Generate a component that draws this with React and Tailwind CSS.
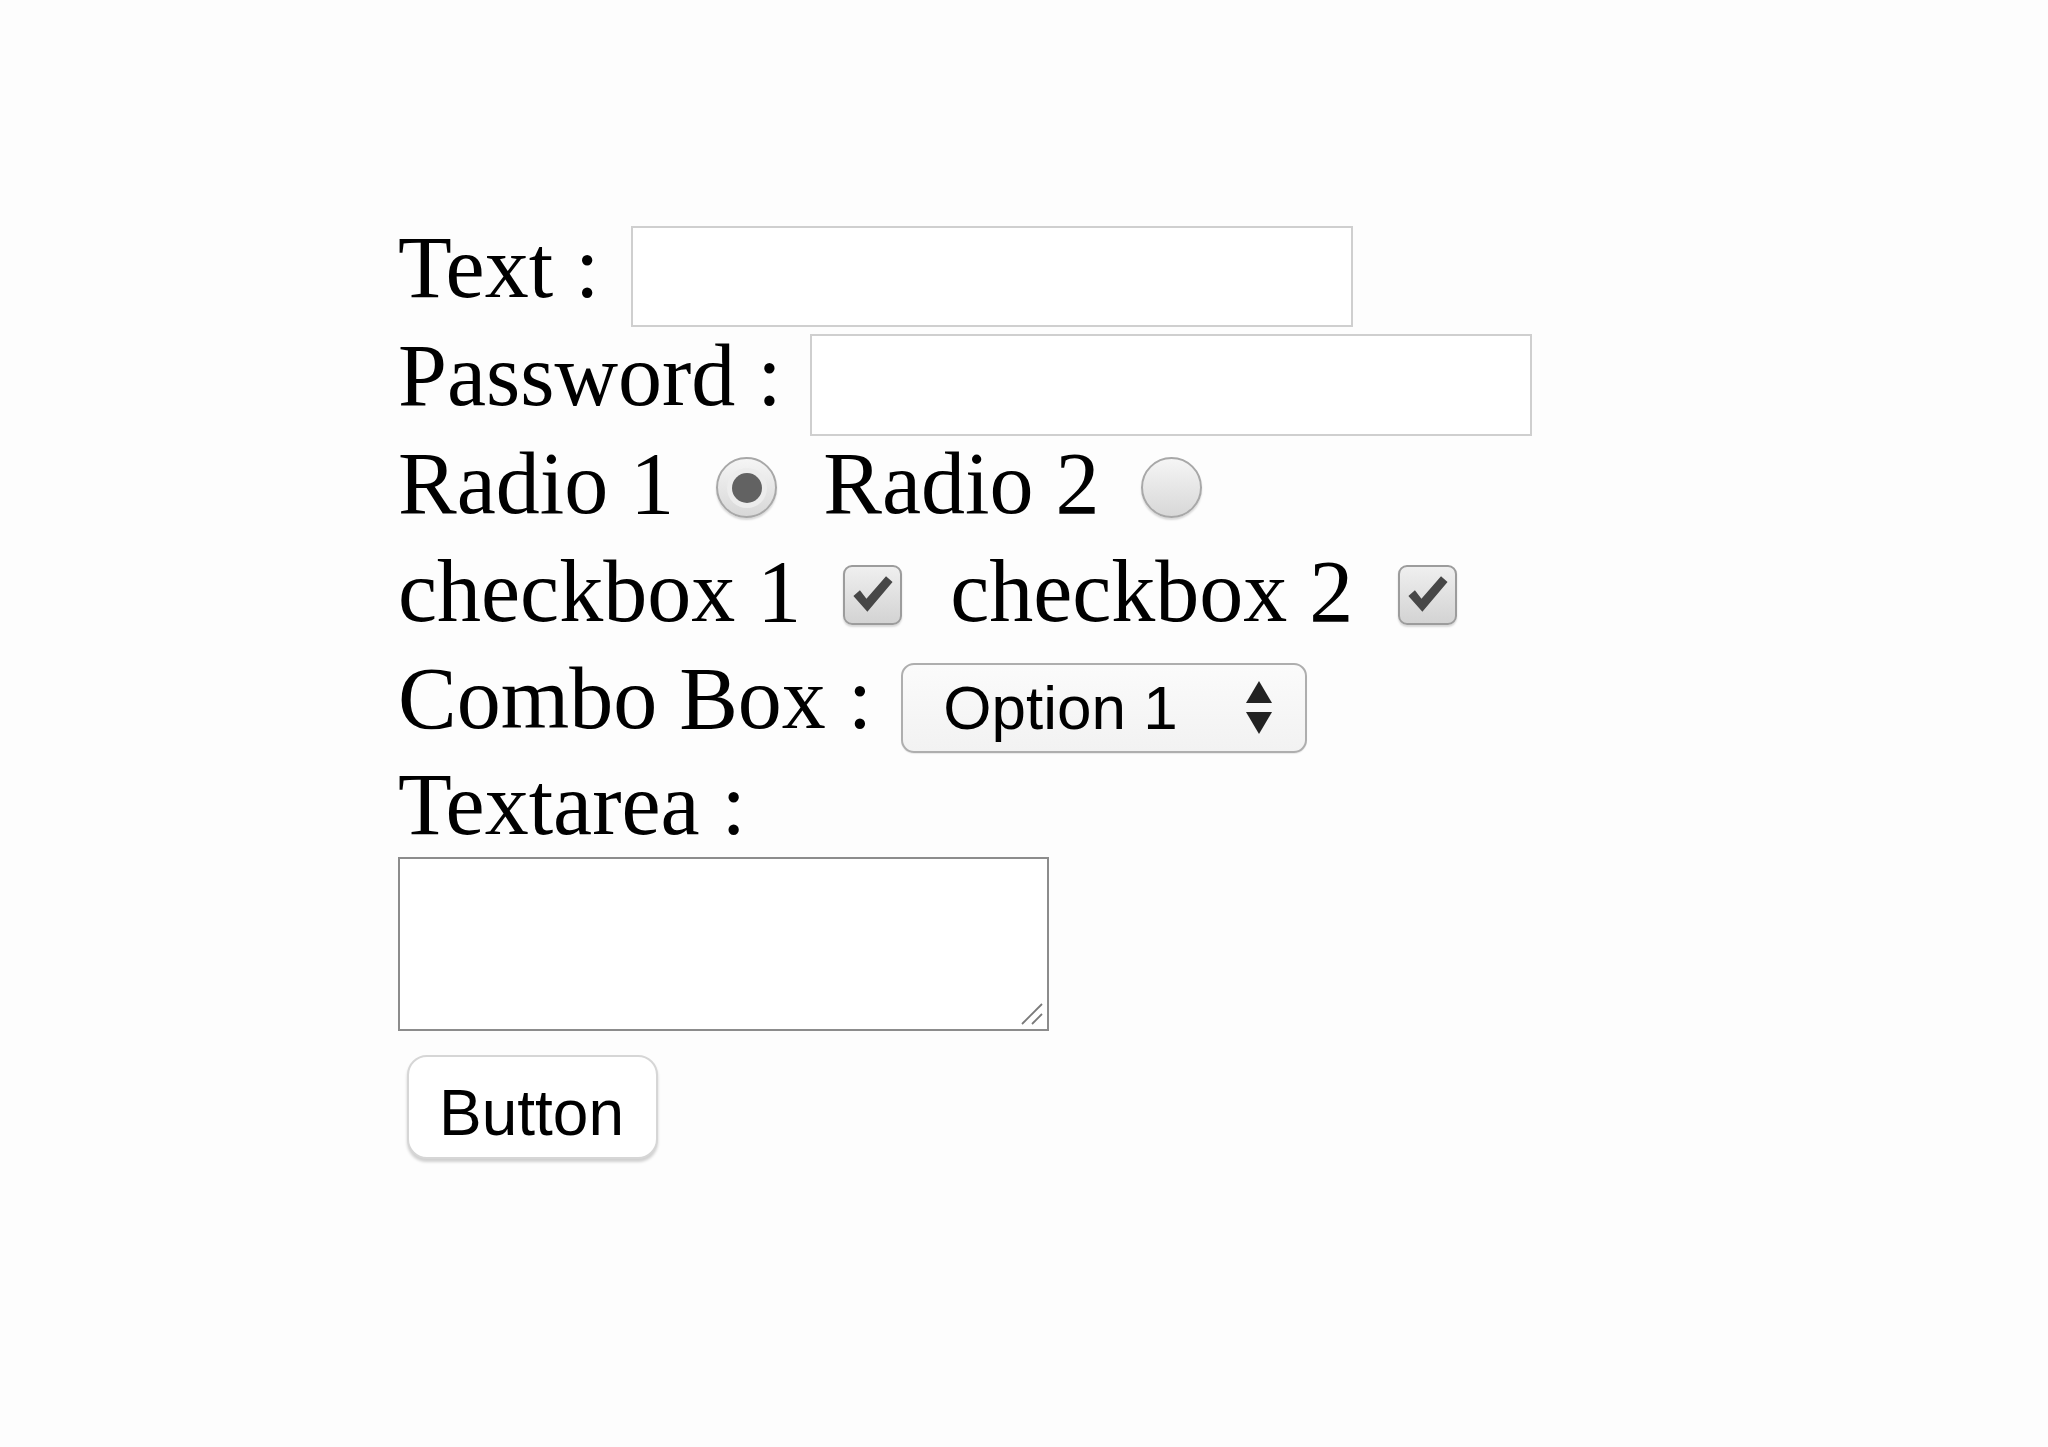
import React, { useState } from "react";

const Radio = ({ checked, className }) => (
  <span
    className={`flex h-[61px] w-[61px] shrink-0 items-center justify-center rounded-full border-2 border-[#a8a8a8] bg-linear-to-b from-[#f5f5f5] to-[#d8d8d8] shadow-[0_2px_2px_rgba(0,0,0,0.15)] ${className}`}
  >
    {checked && (
      <span className="flex h-[40px] w-[40px] items-center justify-center rounded-full bg-[#ececec]">
        <span className="h-[30px] w-[30px] rounded-full bg-[#626262]" />
      </span>
    )}
  </span>
);

const Checkbox = ({ className }) => (
  <span
    className={`flex h-[60px] w-[59px] shrink-0 items-center justify-center rounded-[9px] border-2 border-[#9c9c9c] bg-linear-to-b from-[#efefef] to-[#d3d3d3] shadow-[0_2px_2px_rgba(0,0,0,0.15)] ${className}`}
  >
    <svg width="59" height="60" viewBox="0 0 59 60">
      <path d="M9 31 L16 25 L23 34 L44 10 L51 16 L24 48 Z" fill="#474747" />
    </svg>
  </span>
);

export default function App() {
  const [text, setText] = useState("");
  const [password, setPassword] = useState("");
  const [notes, setNotes] = useState("");

  return (
    <div className="min-h-screen bg-[#fdfdfd] pl-[398px] pt-[224px] font-['Liberation_Serif','Times_New_Roman',serif] text-[88px] leading-none text-black">
      <div className="flex h-[108px] items-start">
        <span className="whitespace-pre">Text :</span>
        <input
          type="text"
          value={text}
          onChange={(e) => setText(e.target.value)}
          className="ml-[31px] mt-[2px] h-[101px] w-[722px] border-2 border-[#cfcfcf] bg-white px-2 text-[40px] outline-none"
        />
      </div>

      <div className="flex h-[108px] items-start">
        <span className="whitespace-pre">Password :</span>
        <input
          type="password"
          value={password}
          onChange={(e) => setPassword(e.target.value)}
          className="ml-[28px] mt-[2px] h-[102px] w-[722px] border-2 border-[#cfcfcf] bg-white px-2 text-[40px] outline-none"
        />
      </div>

      <div className="flex h-[108px] items-start">
        <span className="whitespace-pre">Radio 1</span>
        <Radio checked className="ml-[42px] mt-[17px]" />
        <span className="ml-[46px] whitespace-pre">Radio 2</span>
        <Radio className="ml-[42px] mt-[17px]" />
      </div>

      <div className="flex h-[107px] items-start">
        <span className="whitespace-pre">checkbox 1</span>
        <Checkbox className="ml-[42px] mt-[17px]" />
        <span className="ml-[48px] whitespace-pre">checkbox 2</span>
        <Checkbox className="ml-[45px] mt-[17px]" />
      </div>

      <div className="flex h-[106px] items-start">
        <span className="whitespace-pre">Combo Box :</span>
        <button className="ml-[29px] mt-[8px] flex h-[90px] w-[406px] items-center rounded-[13px] border-2 border-[#aeaeae] bg-linear-to-b from-[#fbfbfb] to-[#f2f2f2] pl-[40px] font-['Liberation_Sans',Arial,sans-serif] text-[62px] leading-none shadow-[0_1px_1px_rgba(0,0,0,0.08)]">
          <span>Option 1</span>
          <svg
            className="ml-auto mr-[33px]"
            width="26"
            height="54"
            viewBox="0 0 26 54"
          >
            <path d="M13 0 L26 22 L0 22 Z" fill="#222" />
            <path d="M0 31 L26 31 L13 53 Z" fill="#222" />
          </svg>
        </button>
      </div>

      <div className="h-[96px] whitespace-pre">Textarea :</div>

      <div className="relative h-[174px] w-[651px]">
        <textarea
          value={notes}
          onChange={(e) => setNotes(e.target.value)}
          className="block h-full w-full resize-none border-2 border-[#8c8c8c] bg-white p-2 text-[30px] outline-none"
        />
        <svg
          className="absolute bottom-[5px] right-[5px]"
          width="24"
          height="24"
          viewBox="0 0 24 24"
        >
          <line x1="2" y1="22" x2="22" y2="2" stroke="#7a7a7a" strokeWidth="1.8" />
          <line x1="12" y1="22" x2="22" y2="12" stroke="#7a7a7a" strokeWidth="1.8" />
        </svg>
      </div>

      <button className="ml-[9px] mt-[24px] flex h-[104px] w-[251px] items-start rounded-[20px] border-2 border-[#d6d6d6] bg-white pl-[30px] pt-[24px] font-['Liberation_Sans',Arial,sans-serif] text-[64px] leading-none shadow-[0_3px_3px_rgba(0,0,0,0.18)]">
        Button
      </button>
    </div>
  );
}
